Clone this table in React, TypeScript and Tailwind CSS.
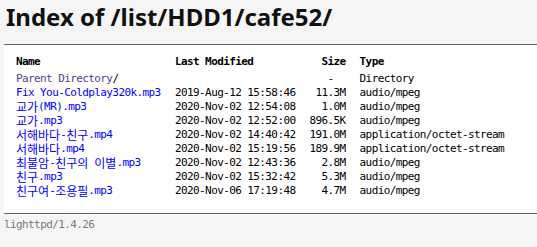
import React from 'react';

type Entry = {
  name: string;
  modified: string;
  size: string;
  type: string;
};

const entries: Entry[] = [
  { name: 'Fix You-Coldplay320k.mp3', modified: '2019-Aug-12 15:58:46', size: '11.3M', type: 'audio/mpeg' },
  { name: '교가(MR).mp3', modified: '2020-Nov-02 12:54:08', size: '1.0M', type: 'audio/mpeg' },
  { name: '교가.mp3', modified: '2020-Nov-02 12:52:00', size: '896.5K', type: 'audio/mpeg' },
  { name: '서해바다-친구.mp4', modified: '2020-Nov-02 14:40:42', size: '191.0M', type: 'application/octet-stream' },
  { name: '서해바다.mp4', modified: '2020-Nov-02 15:19:56', size: '189.9M', type: 'application/octet-stream' },
  { name: '최불암-친구의 이별.mp3', modified: '2020-Nov-02 12:43:36', size: '2.8M', type: 'audio/mpeg' },
  { name: '친구.mp3', modified: '2020-Nov-02 15:32:42', size: '5.3M', type: 'audio/mpeg' },
  { name: '친구여-조용필.mp3', modified: '2020-Nov-06 17:19:48', size: '4.7M', type: 'audio/mpeg' },
];

function Mixed({ text }: { text: string }) {
  const parts = text.split(/([\uac00-\ud7a3]+)/);
  return (
    <>
      {parts.map((p, i) =>
        /[\uac00-\ud7a3]/.test(p) ? (
          <span
            key={i}
            className="inline-block h-[14px] align-top text-[12px] leading-[14px] tracking-[0px] font-['Noto_Sans_CJK_KR',sans-serif]"
          >
            {p}
          </span>
        ) : (
          <span key={i}>{p}</span>
        )
      )}
    </>
  );
}

export default function App() {
  const mono = "font-['DejaVu_Sans_Mono','Noto_Sans_CJK_KR',monospace] text-[11px] tracking-[-0.6px]";

  return (
    <div className="min-h-screen bg-[#f5f5f5] pl-[4px] text-black">
      <h2 className="pl-[2px] pt-[1px] mb-[12px] font-['Noto_Sans',sans-serif] text-[24px] font-bold leading-[31px] text-[#111]">
        Index of /list/HDD1/cafe52/
      </h2>

      <div className="border-y border-[#646464] bg-white pt-[10px] pb-[15px]">
        <table className={`ml-[12px] table-fixed border-collapse ${mono}`}>
          <colgroup>
            <col className="w-[159px]" />
            <col className="w-[134px]" />
            <col className="w-[50px]" />
            <col className="w-[160px]" />
          </colgroup>
          <thead>
            <tr className="h-[17px] align-top leading-[14px]">
              <th className="pr-[14px] pb-[3px] text-left font-bold text-black">Name</th>
              <th className="pr-[14px] pb-[3px] text-left font-bold text-black">Last Modified</th>
              <th className="pr-[14px] pb-[3px] text-right font-bold text-black">Size</th>
              <th className="pr-[14px] pb-[3px] text-left font-bold text-black">Type</th>
            </tr>
          </thead>
          <tbody>
            <tr className="h-[14px] leading-[14px] whitespace-nowrap">
              <td className="pr-[14px]">
                <a className="text-[#48468f]">Parent Directory</a>/
              </td>
              <td className="pr-[14px]">&nbsp;</td>
              <td className="pr-[14px] text-right">-&nbsp;&nbsp;</td>
              <td className="pr-[14px]">Directory</td>
            </tr>
            {entries.map((e) => (
              <tr key={e.name} className="h-[14px] leading-[14px] whitespace-nowrap">
                <td className="pr-[14px]">
                  <a className="text-[#0000ff]">
                    <Mixed text={e.name} />
                  </a>
                </td>
                <td className="pr-[14px]">{e.modified}</td>
                <td className="pr-[14px] text-right">{e.size}</td>
                <td className="pr-[14px]">{e.type}</td>
              </tr>
            ))}
          </tbody>
        </table>
      </div>

      <div className={`pt-[4px] leading-[14px] text-[#787878] ${mono}`}>lighttpd/1.4.26</div>
    </div>
  );
}
